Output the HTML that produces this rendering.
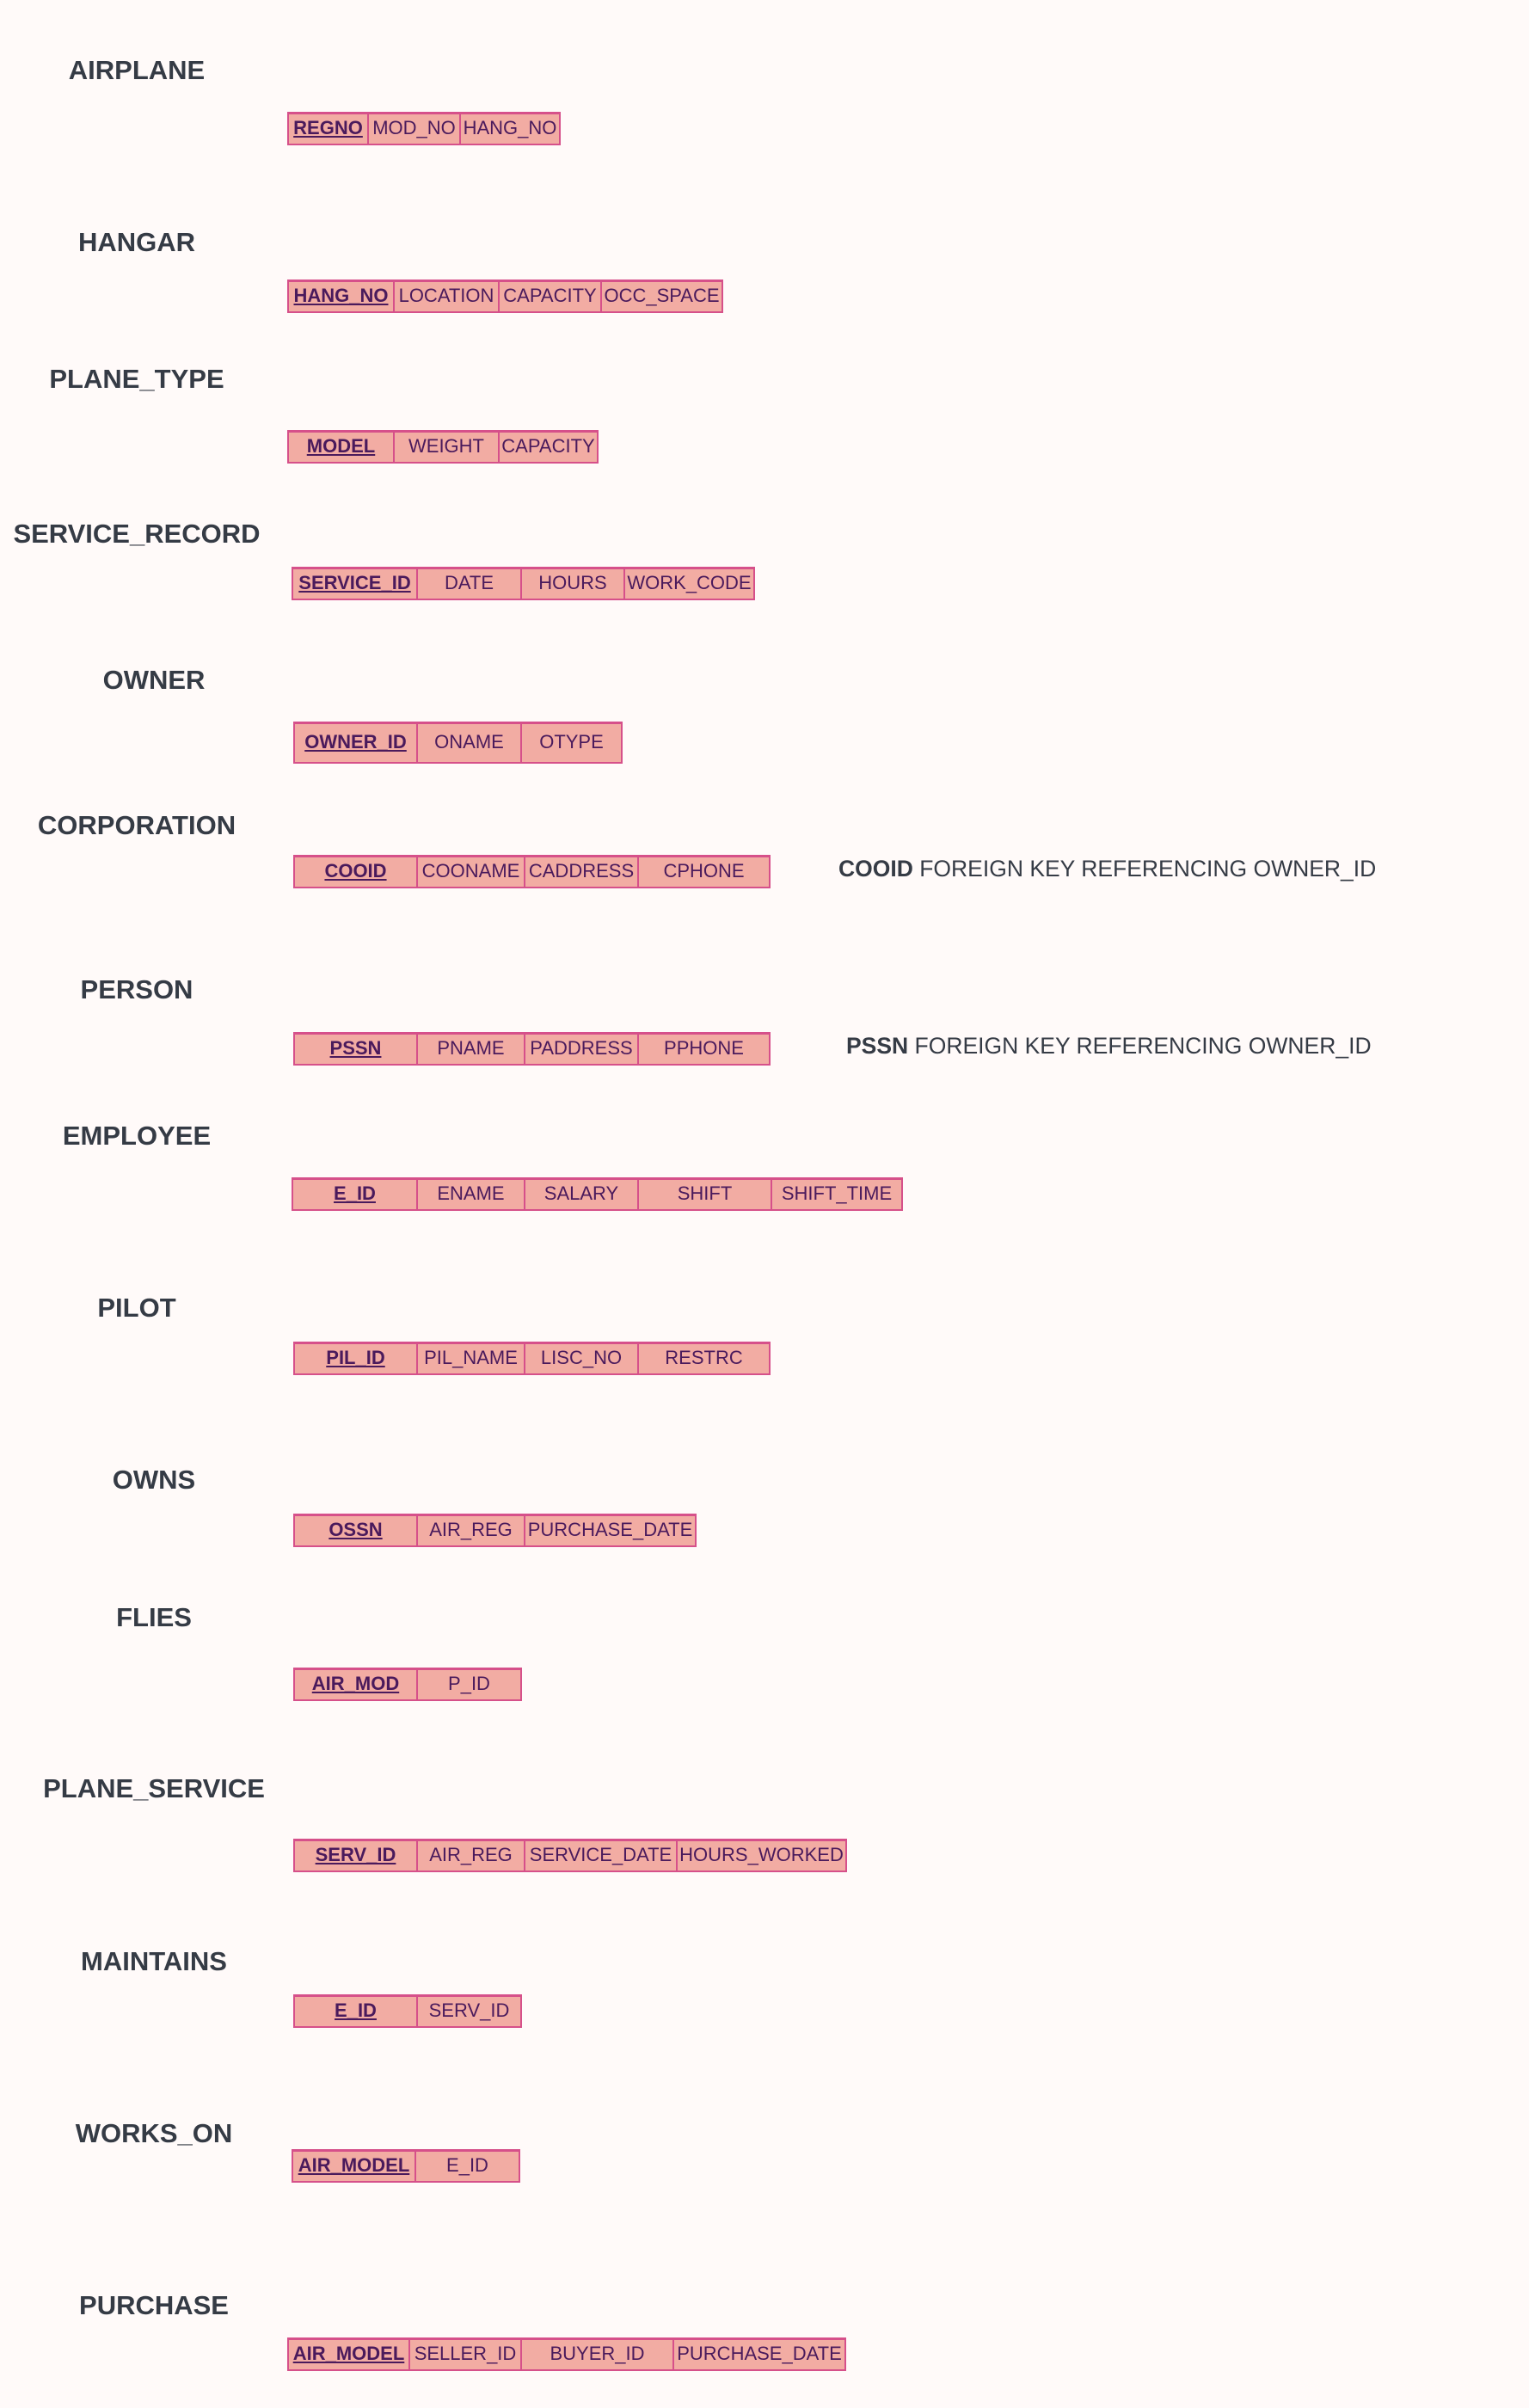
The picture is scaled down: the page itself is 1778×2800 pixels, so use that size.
<!DOCTYPE html>
<html><head><meta charset="utf-8">
<style>
html,body{margin:0;padding:0;}
body{width:1778px;height:2800px;background:#fffaf9;position:relative;overflow:hidden;font-family:"Liberation Sans",Arial,sans-serif;}
.t{position:absolute;width:400px;text-align:center;font-weight:bold;font-size:31px;line-height:34px;color:#353b45;}
.b{position:absolute;display:flex;height:39px;box-sizing:border-box;border:2px solid #d6508a;border-top-width:3px;background:#f2aca3;}
.b div{box-sizing:border-box;border-left:2px solid #d6508a;text-align:center;font-size:22px;line-height:26px;padding-top:3px;color:#4a1a5c;white-space:nowrap;overflow:hidden;}
.b div:first-child{border-left:none;font-weight:bold;text-decoration:underline;text-decoration-thickness:2px;text-underline-offset:2px;}
.n{position:absolute;font-size:26.5px;line-height:30px;color:#353b45;white-space:nowrap;}
</style></head><body>

<div class="t" style="left:-41px;top:65px">AIRPLANE</div>
<div class="b" style="left:334px;top:130px;width:318px"><div style="width:91px">REGNO</div><div style="width:107px">MOD_NO</div><div style="width:116px">HANG_NO</div></div>

<div class="t" style="left:-41px;top:265px">HANGAR</div>
<div class="b" style="left:334px;top:325px;width:507px"><div style="width:121px">HANG_NO</div><div style="width:122px">LOCATION</div><div style="width:119px">CAPACITY</div><div style="width:141px">OCC_SPACE</div></div>

<div class="t" style="left:-41px;top:424px">PLANE_TYPE</div>
<div class="b" style="left:334px;top:500px;width:362px"><div style="width:121px">MODEL</div><div style="width:122px">WEIGHT</div><div style="width:115px">CAPACITY</div></div>

<div class="t" style="left:-41px;top:604px">SERVICE_RECORD</div>
<div class="b" style="left:339px;top:659px;width:539px"><div style="width:143px">SERVICE_ID</div><div style="width:121px">DATE</div><div style="width:120px">HOURS</div><div style="width:151px">WORK_CODE</div></div>

<div class="t" style="left:-21px;top:774px">OWNER</div>
<div class="b" style="left:341px;top:839px;width:383px;height:49px"><div style="width:141px;padding-top:8px">OWNER_ID</div><div style="width:121px;padding-top:8px">ONAME</div><div style="width:117px;padding-top:8px">OTYPE</div></div>

<div class="t" style="left:-41px;top:943px">CORPORATION</div>
<div class="b" style="left:341px;top:994px;width:555px"><div style="width:141px">COOID</div><div style="width:125px">COONAME</div><div style="width:132px">CADDRESS</div><div style="width:153px">CPHONE</div></div>
<div class="n" style="left:975px;top:995px"><b>COOID</b> FOREIGN KEY REFERENCING OWNER_ID</div>

<div class="t" style="left:-41px;top:1134px">PERSON</div>
<div class="b" style="left:341px;top:1200px;width:555px"><div style="width:141px">PSSN</div><div style="width:125px">PNAME</div><div style="width:132px">PADDRESS</div><div style="width:153px">PPHONE</div></div>
<div class="n" style="left:984px;top:1201px"><b>PSSN</b> FOREIGN KEY REFERENCING OWNER_ID</div>

<div class="t" style="left:-41px;top:1304px">EMPLOYEE</div>
<div class="b" style="left:339px;top:1369px;width:711px"><div style="width:143px">E_ID</div><div style="width:125px">ENAME</div><div style="width:132px">SALARY</div><div style="width:155px">SHIFT</div><div style="width:152px">SHIFT_TIME</div></div>

<div class="t" style="left:-41px;top:1504px">PILOT</div>
<div class="b" style="left:341px;top:1560px;width:555px"><div style="width:141px">PIL_ID</div><div style="width:125px">PIL_NAME</div><div style="width:132px">LISC_NO</div><div style="width:153px">RESTRC</div></div>

<div class="t" style="left:-21px;top:1704px">OWNS</div>
<div class="b" style="left:341px;top:1760px;width:469px"><div style="width:141px">OSSN</div><div style="width:125px">AIR_REG</div><div style="width:199px">PURCHASE_DATE</div></div>

<div class="t" style="left:-21px;top:1864px">FLIES</div>
<div class="b" style="left:341px;top:1939px;width:266px"><div style="width:141px">AIR_MOD</div><div style="width:121px">P_ID</div></div>

<div class="t" style="left:-21px;top:2063px">PLANE_SERVICE</div>
<div class="b" style="left:341px;top:2138px;width:644px"><div style="width:141px">SERV_ID</div><div style="width:125px">AIR_REG</div><div style="width:177px">SERVICE_DATE</div><div style="width:197px">HOURS_WORKED</div></div>

<div class="t" style="left:-21px;top:2264px">MAINTAINS</div>
<div class="b" style="left:341px;top:2319px;width:266px"><div style="width:141px">E_ID</div><div style="width:121px">SERV_ID</div></div>

<div class="t" style="left:-21px;top:2464px">WORKS_ON</div>
<div class="b" style="left:339px;top:2499px;width:266px"><div style="width:141px">AIR_MODEL</div><div style="width:121px">E_ID</div></div>

<div class="t" style="left:-21px;top:2664px">PURCHASE</div>
<div class="b" style="left:334px;top:2718px;width:650px"><div style="width:139px">AIR_MODEL</div><div style="width:130px">SELLER_ID</div><div style="width:177px">BUYER_ID</div><div style="width:200px">PURCHASE_DATE</div></div>

</body></html>
